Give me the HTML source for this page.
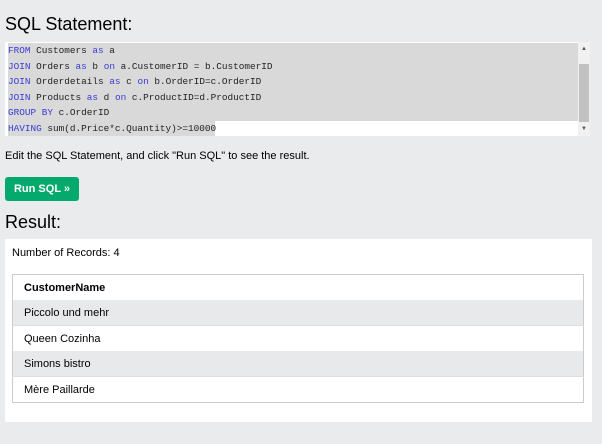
<!DOCTYPE html><html><head><style>
body{margin:0;background:#e9ebec;font-family:"Liberation Sans",sans-serif;color:#000;width:602px;height:444px;overflow:hidden;position:relative}
.a{position:absolute}
h2{position:absolute;margin:0;font-weight:normal;font-size:18px;left:5px;top:14px}
.code{left:5px;top:42px;width:585px;height:94px;background:#fff}
.ln{position:absolute;left:3px;font-family:"Liberation Mono",monospace;font-size:9.4px;height:15.5px;line-height:15.5px;background:#d9d9d9;color:#222;white-space:pre}
.k{color:#3b3bd6}
td,th{height:25px;padding:0 0 0 11px;text-align:left;font-size:11px;border:none}
</style></head><body>
<h2>SQL Statement:</h2>
<div class="a code">
<div class="ln" style="top:1px;width:571px"><span class="k">FROM</span> Customers <span class="k">as</span> a</div>
<div class="ln" style="top:16.5px;width:571px"><span class="k">JOIN</span> Orders <span class="k">as</span> b <span class="k">on</span> a.CustomerID = b.CustomerID</div>
<div class="ln" style="top:32px;width:571px"><span class="k">JOIN</span> Orderdetails <span class="k">as</span> c <span class="k">on</span> b.OrderID=c.OrderID</div>
<div class="ln" style="top:47.5px;width:571px"><span class="k">JOIN</span> Products <span class="k">as</span> d <span class="k">on</span> c.ProductID=d.ProductID</div>
<div class="ln" style="top:63px;width:571px"><span class="k">GROUP BY</span> c.OrderID</div>
<div class="ln" style="top:78.5px;width:207px"><span class="k">HAVING</span> sum(d.Price*c.Quantity)&gt;=10000</div>
<div class="a" style="left:573px;top:0;width:12px;height:94px;background:#f1f1f1"></div>
<div class="a" style="left:574px;top:22px;width:10px;height:58px;background:#c1c1c1"></div>
<div class="a" style="left:576px;top:4px;font-size:6px;color:#555">▲</div>
<div class="a" style="left:576px;top:84px;font-size:6px;color:#555">▼</div>
</div>
<div class="a" style="left:5px;top:150px;font-size:11px">Edit the SQL Statement, and click "Run SQL" to see the result.</div>
<div class="a" style="left:5px;top:177px;width:74px;height:24px;background:#04aa6d;border-radius:3px;color:#fff;font-weight:bold;font-size:11px;line-height:24px;text-align:center">Run SQL »</div>
<h2 style="top:212px">Result:</h2>
<div class="a" style="left:5px;top:239px;width:587px;height:183px;background:#fff">
<div class="a" style="left:7px;top:8px;font-size:11px">Number of Records: 4</div>
<table class="a" style="left:7px;top:35px;width:572px;border-collapse:collapse;border:1px solid #ccc">
<tr><th>CustomerName</th></tr>
<tr style="background:#e7e9eb"><td>Piccolo und mehr</td></tr>
<tr><td style="border-top:1px solid #ddd">Queen Cozinha</td></tr>
<tr style="background:#e7e9eb"><td>Simons bistro</td></tr>
<tr><td style="border-top:1px solid #ddd">Mère Paillarde</td></tr>
</table></div>
</body></html>
